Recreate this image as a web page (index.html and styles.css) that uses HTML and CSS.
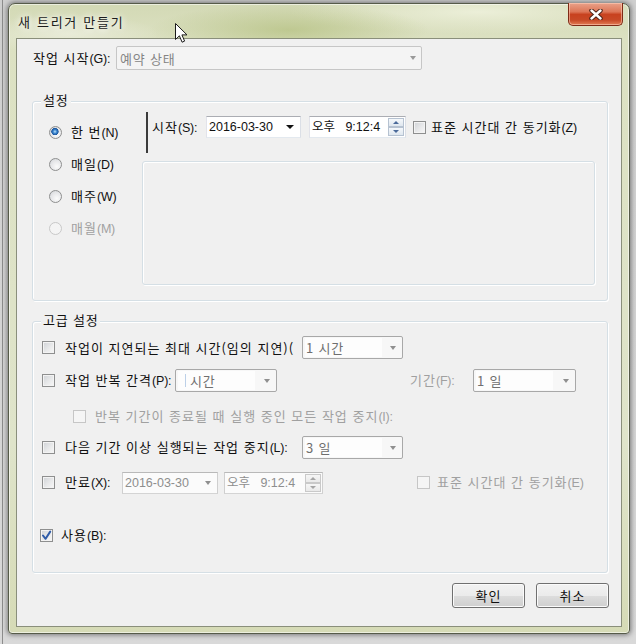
FILE: index.html
```html
<!DOCTYPE html>
<html lang="ko">
<head>
<meta charset="utf-8">
<title>새 트리거 만들기</title>
<link rel="stylesheet" href="styles.css">
</head>
<body>
<div class="desk">
  <div class="win">
    <div class="titlebar">
      <span class="title">새 트리거 만들기</span>
      <div class="close">
        <svg width="14" height="11" viewBox="0 0 14 11"><path class="x-shadow" d="M2.5 1.5 L11.5 9.5 M11.5 1.5 L2.5 9.5"/><path class="x-stroke" d="M2.5 1.5 L11.5 9.5 M11.5 1.5 L2.5 9.5"/></svg>
      </div>
    </div>
    <div class="client">
      <div class="begin-row">
        <span class="lbl begin-lbl">작업 시작<span class="acc">(G):</span></span>
        <div class="combo combo-begin">
          <span class="combo-text">예약 상태</span>
          <span class="arrow"></span>
        </div>
      </div>

      <div class="group group-settings">
        <span class="legend">설정</span>
        <div class="radios">
          <div class="radio-row"><span class="radio is-on"></span><span class="lbl">한 번<span class="acc">(N)</span></span></div>
          <div class="radio-row"><span class="radio"></span><span class="lbl">매일<span class="acc">(D)</span></span></div>
          <div class="radio-row"><span class="radio"></span><span class="lbl">매주<span class="acc">(W)</span></span></div>
          <div class="radio-row is-disabled"><span class="radio"></span><span class="lbl">매월<span class="acc">(M)</span></span></div>
        </div>
        <div class="sched">
          <div class="start-row">
            <span class="lbl start-lbl">시작<span class="acc">(S):</span></span>
            <div class="field date-field">
              <span class="field-text">2016-03-30</span>
              <span class="arrow arrow-dark"></span>
            </div>
            <div class="field time-field">
              <span class="field-text">오후&nbsp;&nbsp; 9:12:4</span>
              <span class="spin"><span class="spin-btn"><span class="tri-up"></span></span><span class="spin-btn"><span class="tri-down"></span></span></span>
            </div>
            <span class="check sync-check"></span>
            <span class="lbl sync-lbl">표준 시간대 간 동기화<span class="acc">(Z)</span></span>
          </div>
          <div class="panel"></div>
        </div>
      </div>

      <div class="group group-adv">
        <span class="legend">고급 설정</span>

        <div class="adv-row">
          <span class="check"></span>
          <span class="lbl lbl-cut">작업이 지연되는 최대 시간(임의 지연)(</span>
          <div class="combo combo-sm"><span class="combo-text">1 시간</span><span class="arrow"></span></div>
        </div>

        <div class="adv-row row-repeat">
          <span class="check"></span>
          <span class="lbl lbl-repeat">작업 반복 간격<span class="acc">(P):</span></span>
          <div class="combo combo-sm combo-repeat"><span class="combo-text"><span class="caret"></span>시간</span><span class="arrow"></span></div>
          <span class="lbl lbl-period is-gray">기간<span class="acc">(F):</span></span>
          <div class="combo combo-sm combo-period"><span class="combo-text">1 일</span><span class="arrow"></span></div>
        </div>

        <div class="adv-row row-stopall">
          <span class="check is-disabled"></span>
          <span class="lbl is-gray">반복 기간이 종료될 때 실행 중인 모든 작업 중지<span class="acc">(I):</span></span>
        </div>

        <div class="adv-row row-stoplong">
          <span class="check"></span>
          <span class="lbl lbl-cut">다음 기간 이상 실행되는 작업 중지<span class="acc">(L):</span></span>
          <div class="combo combo-sm"><span class="combo-text">3 일</span><span class="arrow"></span></div>
        </div>

        <div class="adv-row row-expire">
          <span class="check"></span>
          <span class="lbl lbl-expire">만료<span class="acc">(X):</span></span>
          <div class="field date-field is-disabled">
            <span class="field-text">2016-03-30</span>
            <span class="arrow"></span>
          </div>
          <div class="field time-field is-disabled">
            <span class="field-text">오후&nbsp;&nbsp; 9:12:4</span>
            <span class="spin"><span class="spin-btn"><span class="tri-up"></span></span><span class="spin-btn"><span class="tri-down"></span></span></span>
          </div>
          <span class="check is-disabled utc-check"></span>
          <span class="lbl is-gray utc-lbl">표준 시간대 간 동기화<span class="acc">(E)</span></span>
        </div>

        <div class="adv-row row-enabled">
          <span class="check is-checked">
            <svg width="11" height="11" viewBox="0 0 11 11"><path d="M2 5.5 L4.6 8.8 L9.2 1.6"/></svg>
          </span>
          <span class="lbl">사용<span class="acc">(B):</span></span>
        </div>
      </div>

      <div class="buttons">
        <button class="btn">확인</button>
        <button class="btn">취소</button>
      </div>
    </div>
  </div>
  <svg class="cursor" width="13" height="21" viewBox="0 0 13 21"><path d="M0.5 0.5 L0.5 16.5 L4.4 12.8 L7.1 19.2 L9.6 18.1 L6.9 11.9 L12 11.9 Z"/></svg>
</div>
</body>
</html>
```

FILE: styles.css
```css
* { box-sizing: border-box; }
html, body { margin: 0; padding: 0; }
body {
  background: #d0d0d0;
  font-family: "Noto Sans CJK KR", sans-serif;
}

.desk {
  position: relative;
  width: 636px;
  height: 644px;
  overflow: hidden;
  padding: 3px 0 0 8px;
  background:
    linear-gradient(90deg, transparent 0, transparent 2px, #8c8c8c 2px, #8c8c8c 3px, transparent 3px),
    linear-gradient(180deg, #cfcfcf 0, #d9d9d9 100%);
}

/* window frame */
.win {
  position: relative;
  width: 622px;
  height: 631px;
  border: 1px solid #565b49;
  border-radius: 7px 7px 4px 4px;
  padding: 0 7px 6px;
  display: flex;
  flex-direction: column;
  background:
    radial-gradient(ellipse 140px 26px at 280px 26px, rgba(168, 182, 108, .55), transparent),
    radial-gradient(ellipse 190px 22px at 470px 8px, rgba(238, 241, 220, .9), transparent),
    radial-gradient(ellipse 90px 20px at 60px 30px, rgba(236, 238, 222, .8), transparent),
    linear-gradient(180deg, #d3d9b5 0, #dce1c2 36px, #dfe4ca 70%, #d6dbb6 100%);
  box-shadow: 0 0 5px 1px rgba(0, 0, 0, .45), inset 0 0 0 1px rgba(255, 255, 255, .55);
}

.titlebar {
  height: 34px;
  display: flex;
  align-items: flex-start;
}
.title {
  margin: 10px 0 0 2px;
  font-size: 13px;
  line-height: 16px;
  letter-spacing: 1.7px;
  color: #1b1b1b;
  text-shadow: 0 0 6px #fff, 0 0 10px rgba(255, 255, 255, .9);
}
.close {
  margin: -1px -1px 0 auto;
  width: 55px;
  height: 23px;
  border: 1px solid #7e2a16;
  border-top: none;
  border-radius: 0 0 5px 5px;
  background: linear-gradient(180deg, #e9a28a 0%, #dd7657 40%, #c8421f 52%, #c84a27 78%, #e27d55 100%);
  box-shadow: inset 0 0 0 1px rgba(255, 210, 190, .55);
  display: flex;
  align-items: center;
  justify-content: center;
}
.close svg { display: block; }
.x-shadow { stroke: #4a2015; stroke-width: 4.4; stroke-linecap: round; fill: none; }
.x-stroke { stroke: #ffffff; stroke-width: 2.4; stroke-linecap: round; fill: none; }

/* client area */
.client {
  flex: 1;
  background: #f0f0f0;
  border: 1px solid #8a8f7b;
  display: flex;
  flex-direction: column;
}

.lbl {
  font-size: 13px;
  letter-spacing: 1px;
  color: #111;
  white-space: nowrap;
  line-height: 18px;
}
.acc {
  font-family: "Liberation Sans", sans-serif;
  font-size: 12.5px;
  letter-spacing: -0.2px;
}
.is-gray, .is-disabled .lbl { color: #a0a0a0; }

.begin-row {
  display: flex;
  align-items: center;
  height: 24px;
  margin-top: 7px;
  padding-left: 16px;
}
.begin-lbl { width: 83px; }

/* combos */
.combo {
  display: flex;
  align-items: center;
  border: 1px solid #b3b3b3;
  border-radius: 2px;
  background: #f4f4f4;
  padding-left: 3px;
  font-size: 13px;
  letter-spacing: .8px;
  color: #6f6f6f;
  white-space: nowrap;
}
.combo-begin {
  width: 306px;
  height: 24px;
  border-color: #c6c6c6;
  color: #858585;
}
.combo-sm {
  width: 101px;
  height: 23px;
  padding-left: 2px;
  border-color: #a8a8a8;
  background: #f7f7f7;
}
.combo-sm .combo-text {
  width: 77px;
  height: 19px;
  line-height: 18px;
  background: #fdfdfd;
  padding-left: 1px;
  display: flex;
  align-items: center;
}
.combo-repeat { width: 102px; }
.combo-repeat .combo-text { padding-left: 7px; }
.caret {
  width: 1px;
  height: 13px;
  background: #bcd0e8;
  margin-right: 4px;
}
.combo-period { width: 103px; }
.arrow {
  margin-left: auto;
  margin-right: 6px;
  width: 0;
  height: 0;
  border-left: 3.5px solid transparent;
  border-right: 3.5px solid transparent;
  border-top: 4px solid #8f8f8f;
}
.combo-begin .arrow { margin-right: 5px; border-top-color: #9a9a9a; }
.arrow-dark {
  border-left-width: 4px;
  border-right-width: 4px;
  border-top: 4px solid #111;
}

/* group boxes */
.group {
  position: relative;
  margin-left: 15px;
  width: 576px;
  border: 1px solid #d5dfe5;
  border-radius: 3px;
  box-shadow: inset 1px 1px 0 #fff, 1px 1px 0 #fff;
}
.legend {
  position: absolute;
  top: -11px;
  left: 8px;
  padding: 0 2px;
  background: #f0f0f0;
  font-size: 13px;
  line-height: 18px;
  letter-spacing: .8px;
  color: #111;
}

.group-settings {
  margin-top: 31px;
  height: 200px;
  display: flex;
  padding-left: 16px;
}
.radios {
  width: 93px;
  padding-top: 14px;
}
.radio-row {
  height: 32px;
  display: flex;
  align-items: center;
  gap: 9px;
}
.radio {
  flex: none;
  width: 13px;
  height: 13px;
  border-radius: 50%;
  border: 1px solid #8e8f8f;
  background: radial-gradient(circle at 62% 68%, #fbfbfb 0, #e6e7e9 55%, #cfd2d6 100%);
}
.radio.is-on {
  background:
    radial-gradient(circle at 45% 42%, #bfe4fb 0, #3b86cf 1.8px, #1c559d 3.4px, rgba(0, 0, 0, 0) 3.9px),
    radial-gradient(circle at 62% 68%, #fbfbfb 0, #e6e7e9 55%, #cfd2d6 100%);
}
.is-disabled .radio {
  border-color: #c8c8c8;
  background: #f4f4f4;
}

.sched { width: 453px; }
.start-row {
  display: flex;
  align-items: flex-start;
  height: 41px;
  margin: 10px 0 0 4px;
  border-left: 2px solid #3b3b3b;
  padding: 4px 0 0 4px;
}
.start-row .lbl { line-height: 22px; }
.start-lbl { width: 54px; }

/* date / time fields */
.field {
  display: flex;
  align-items: center;
  height: 22px;
  background: #fff;
  border: 1px solid #abadb3;
  border-color: #abadb3 #dbdfe6 #e3e9ef #e2e3ea;
  padding-left: 2px;
  font-family: "Liberation Sans", "Noto Sans CJK KR", sans-serif;
  font-size: 12.5px;
  color: #111;
  white-space: nowrap;
}
.date-field { width: 95px; }
.time-field { width: 97px; margin-left: 8px; padding-right: 1px; }
.field-text { line-height: 20px; }
.spin {
  margin-left: auto;
  width: 16px;
  height: 18px;
  display: flex;
  flex-direction: column;
}
.spin-btn {
  flex: 1;
  border: 1px solid #b6c2d1;
  background: linear-gradient(180deg, #f5f8fb, #dfe7ef);
  display: flex;
  align-items: center;
  justify-content: center;
}
.tri-up, .tri-down {
  width: 0;
  height: 0;
  border-left: 3px solid transparent;
  border-right: 3px solid transparent;
}
.tri-up { border-bottom: 3px solid #4b6a9a; }
.tri-down { border-top: 3px solid #4b6a9a; }

.field.is-disabled {
  color: #8e8e8e;
  border-color: #b9b9b9 #cfcfcf #d4d4d4 #cfcfcf;
  background: #fbfbfb;
}
.field.is-disabled .spin-btn {
  border-color: #c9c9c9;
  background: linear-gradient(180deg, #f6f6f6, #e9e9e9);
}
.field.is-disabled .tri-up { border-bottom-color: #a5a5a5; }
.field.is-disabled .tri-down { border-top-color: #a5a5a5; }

.sync-check { margin: 5px 0 0 7px; }
.sync-lbl { margin-left: 5px; }

.panel {
  margin-top: 8px;
  width: 453px;
  height: 124px;
  border: 1px solid #d5dfe5;
  border-radius: 3px;
  box-shadow: inset 1px 1px 0 #fff, 1px 1px 0 #fff;
}

/* checkboxes */
.check {
  flex: none;
  position: relative;
  width: 13px;
  height: 13px;
  border: 1px solid #8e8f8f;
  background: linear-gradient(135deg, #cfd2d6 0%, #e8e9ea 55%, #f8f8f8 100%);
  box-shadow: inset 0 0 0 1px #f3f3f3;
}
.check.is-disabled {
  border-color: #c6c6c6;
  background: #f5f5f5;
  box-shadow: none;
}
.check.is-checked svg {
  position: absolute;
  left: 0;
  top: 0;
}
.check.is-checked path {
  fill: none;
  stroke: #2f5ca8;
  stroke-width: 2;
  stroke-linecap: round;
  stroke-linejoin: round;
}

/* advanced group */
.group-adv {
  margin-top: 20px;
  height: 252px;
  padding: 14px 0 0 9px;
}
.adv-row {
  display: flex;
  align-items: center;
  height: 23px;
}
.adv-row > .check + .lbl { margin-left: 10px; }
.lbl-cut { width: 237px; overflow: hidden; }
.lbl-repeat { width: 110px; }
.lbl-period { margin-left: 133px; width: 63px; }
.lbl-expire { width: 57px; }
.row-repeat { margin-top: 10px; }
.row-stopall { margin-top: 13px; }
.row-stopall > .check { margin-left: 31px; }
.row-stopall > .check + .lbl { margin-left: 9px; }
.row-stoplong { margin-top: 8px; }
.row-expire { margin-top: 12px; }
.row-expire .date-field { width: 96px; }
.row-expire .time-field { width: 99px; margin-left: 6px; }
.adv-row > .utc-check { margin-left: 94px; }
.adv-row > .check + .utc-lbl { margin-left: 7px; }
.row-enabled { margin-top: 30px; }
.row-enabled > .check { margin-left: -2px; }
.row-enabled > .check + .lbl { margin-left: 8px; }

/* buttons */
.buttons {
  display: flex;
  justify-content: flex-end;
  gap: 11px;
  margin-top: 10px;
  padding-right: 12px;
}
.btn {
  width: 73px;
  height: 25px;
  border: 1px solid #707070;
  border-radius: 3px;
  background: linear-gradient(180deg, #f2f2f2 0%, #ebebeb 50%, #dddddd 51%, #cfcfcf 100%);
  box-shadow: inset 0 0 0 1px #fbfbfb;
  font-family: "Noto Sans CJK KR", sans-serif;
  font-size: 13px;
  letter-spacing: 1px;
  color: #111;
  padding: 0;
}

/* mouse pointer overlay */
.cursor {
  position: absolute;
  left: 175px;
  top: 23px;
}
.cursor path {
  fill: #fff;
  stroke: #1a1a1a;
  stroke-width: 1;
  stroke-linejoin: round;
}
```
